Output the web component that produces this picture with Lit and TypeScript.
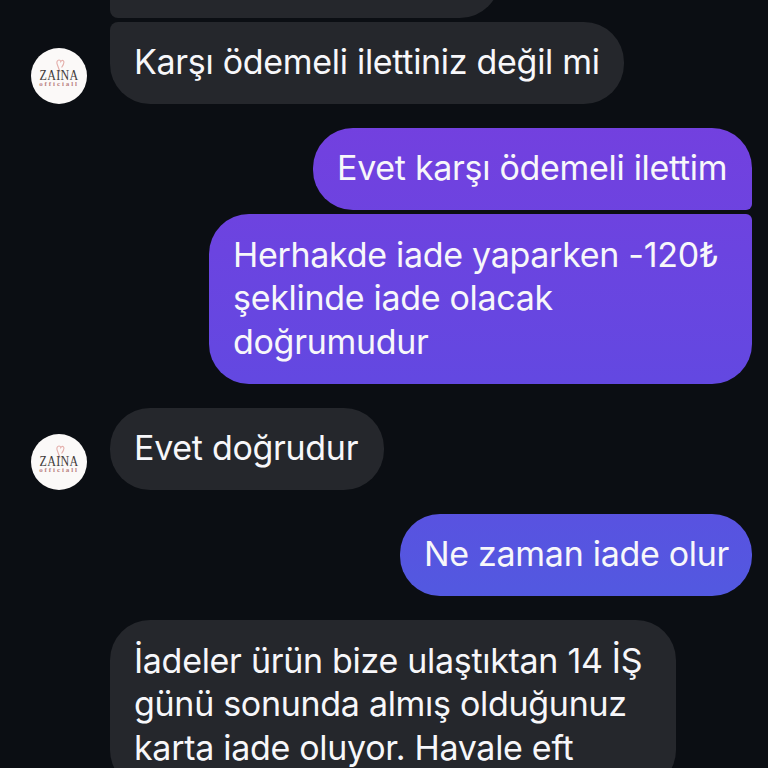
import { LitElement, html, css, nothing } from "lit";
import { customElement } from "lit/decorators.js";

type Msg = {
  from: "them" | "me";
  lines: string[];
  shape: string;
  avatar?: boolean;
  gap: string;
};

const MESSAGES: Msg[] = [
  { from: "them", lines: ["Karşı ödemeli ilettiniz değil mi"], shape: "them-last w-514", avatar: true, gap: "near" },
  { from: "me", lines: ["Evet karşı ödemeli ilettim"], shape: "me-first w-439", gap: "far" },
  { from: "me", lines: ["Herhakde iade yaparken -120₺", "şeklinde iade olacak", "doğrumudur"], shape: "me-last w-543", gap: "near" },
  { from: "them", lines: ["Evet doğrudur"], shape: "solo w-274", avatar: true, gap: "far" },
  { from: "me", lines: ["Ne zaman iade olur"], shape: "solo w-352", gap: "far" },
  { from: "them", lines: ["İadeler ürün bize ulaştıktan 14 İŞ", "günü sonunda almış olduğunuz", "karta iade oluyor. Havale eft"], shape: "solo w-566", gap: "far" },
];

@customElement("app-root")
export class AppRoot extends LitElement {
  static styles = css`
    :host {
      display: block;
      height: 768px;
      overflow: hidden;
      background: #0b0e13;
      font-family: Inter, "Liberation Sans", sans-serif;
    }

    .thread {
      display: flex;
      flex-direction: column;
      padding: 0 16px 0 31px;
      margin-top: -64.5px;
    }

    .row {
      display: flex;
      align-items: flex-end;
      gap: 23px;
      flex-shrink: 0;
    }
    .row.me {
      justify-content: flex-end;
    }
    .row.near {
      margin-top: 4px;
    }
    .row.far {
      margin-top: 23.75px;
    }

    .slot {
      width: 56px;
      flex-shrink: 0;
    }

    .bubble {
      box-sizing: border-box;
      padding: 18.5px 24px 20.5px;
      font-size: 34px;
      line-height: 43.5px;
      letter-spacing: -0.3px;
      white-space: nowrap;
      color: #f7f7fa;
      border-radius: 40px;
    }
    .bubble.them {
      background: #25272c;
    }
    .bubble.me {
      background: linear-gradient(180deg, #7340df 120px, #6348e1 380px, #5259e0 600px) fixed;
    }
    .bubble.blank {
      height: 82px;
      width: 390px;
    }
    .them-first {
      border-bottom-left-radius: 8px;
    }
    .them-last {
      border-top-left-radius: 8px;
    }
    .me-first {
      border-bottom-right-radius: 6px;
    }
    .me-last {
      border-top-right-radius: 6px;
    }
    .w-274 {
      width: 274px;
    }
    .w-352 {
      width: 352px;
    }
    .w-439 {
      width: 439px;
    }
    .w-514 {
      width: 514px;
    }
    .w-543 {
      width: 543px;
    }
    .w-566 {
      width: 566px;
    }

    .line {
      display: block;
    }

    .avatar {
      width: 56px;
      height: 56px;
      flex-shrink: 0;
      border-radius: 50%;
      background: #fbf9f8;
      display: flex;
      flex-direction: column;
      align-items: center;
      justify-content: center;
      position: relative;
      color: #3f3b3a;
    }
    .avatar svg {
      position: absolute;
      top: 11px;
      left: 25px;
    }
    .brand {
      font-family: "Liberation Serif", serif;
      font-size: 12px;
      line-height: 12px;
      letter-spacing: 0.3px;
      margin-top: 4px;
      transform: scaleY(1.2);
    }
    .sub {
      font-family: "Liberation Serif", serif;
      font-weight: 700;
      font-size: 7px;
      line-height: 7px;
      letter-spacing: 1.9px;
      color: #b9807f;
    }
  `;

  private avatar() {
    return html`<div class="avatar">
      <svg width="9" height="14" viewBox="0 0 9 14" fill="none" stroke="#e4aeaa" stroke-width="1.1">
        <path d="M4 13 L1.3 5.5 C0.2 2.8 1.6 1 3 1 C4 1 4.6 1.7 4.8 2.6 C5.4 1.5 6.6 1 7.4 1.8 C8.6 3 7.6 5.6 5.6 8.5" />
      </svg>
      <span class="brand">ZAINA</span>
      <span class="sub">officiall</span>
    </div>`;
  }

  protected render() {
    return html`
      <div class="thread">
        <div class="row">
          <div class="slot"></div>
          <div class="bubble them blank them-first"></div>
        </div>
        ${MESSAGES.map(
          (m) => html`<div class="row ${m.from} ${m.gap}">
            ${m.from === "them"
              ? m.avatar
                ? this.avatar()
                : html`<div class="slot"></div>`
              : nothing}
            <div class="bubble ${m.from} ${m.shape}">
              ${m.lines.map((l) => html`<span class="line">${l}</span>`)}
            </div>
          </div>`,
        )}
      </div>
    `;
  }
}
